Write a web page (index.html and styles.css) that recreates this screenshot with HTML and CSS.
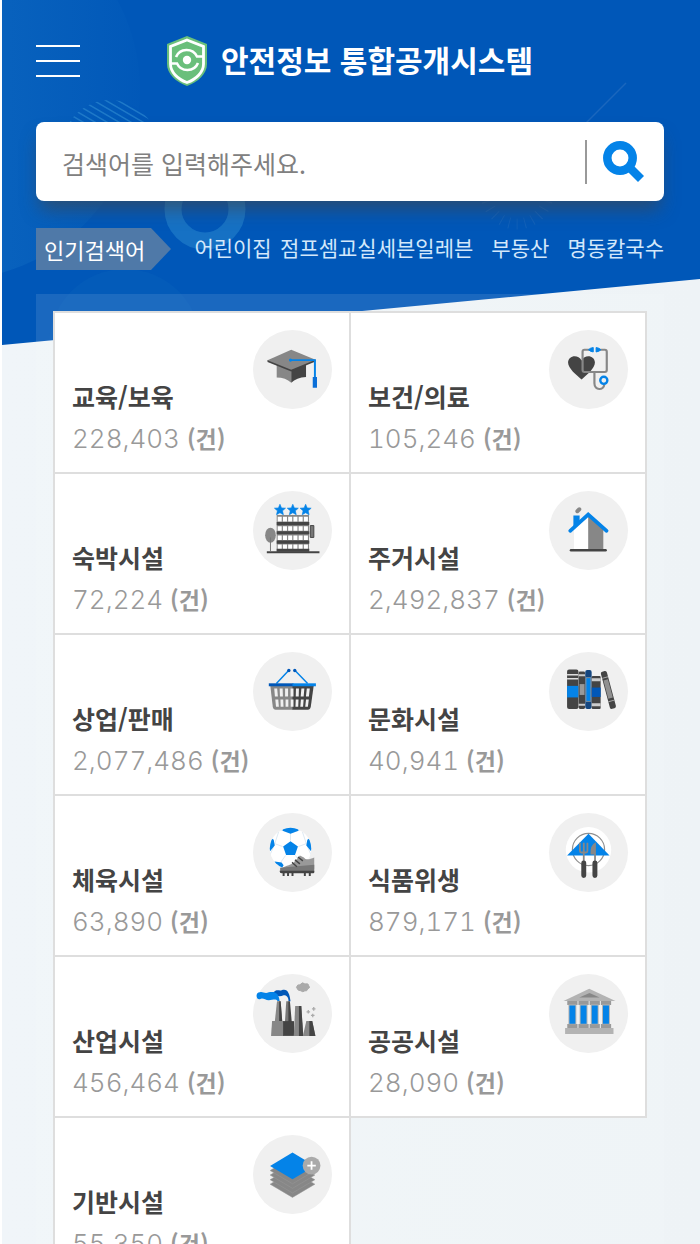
FILE: index.html
```html
<!DOCTYPE html>
<html lang="ko">
<head>
  <meta charset="UTF-8">
  <title>안전정보 통합공개시스템</title>
  <meta name="viewport" content="width=device-width, initial-scale=1.0">
  <link rel="stylesheet" href="styles.css">
</head>
<body>
  <div class="backdrop">
    <svg width="700" height="345" viewBox="2 0 700 345" aria-hidden="true">
      <defs>
        <linearGradient id="glow" x1="0" x2="1">
          <stop offset="0.4" stop-color="#1a78c8" stop-opacity="0.5"/>
          <stop offset="1" stop-color="#1a78c8" stop-opacity="0.04"/>
        </linearGradient>
        <clipPath id="stripeClip"><circle cx="110" cy="148" r="48"/></clipPath>
      </defs>
      <circle cx="-50" cy="90" r="190" fill="url(#glow)"/>
      <circle cx="125" cy="345" r="76" fill="#2a86d0" opacity="0.08"/>
      <g clip-path="url(#stripeClip)" stroke="#2b86cf" stroke-width="1.5" opacity="0.7">
        <path d="M50 124l110 64M50 117l110 64M50 110l110 64M50 103l110 64M50 96l110 64M50 89l110 64M50 82l110 64M50 75l110 64M50 68l110 64M50 61l110 64M50 54l110 64M50 131l110 64M50 138l110 64"/>
      </g>
      <circle cx="205" cy="209" r="32" fill="none" stroke="#1671c4" stroke-width="17"/>
      <path d="M586 123l40-40" stroke="#1a67bd" stroke-width="1.5"/>
      <circle cx="517" cy="193" r="31" fill="none" stroke="#1a67bd" stroke-width="11" stroke-dasharray="1 7" opacity="0.6"/>
    </svg>
  </div>

  <header class="header">
    <button class="menu-btn" type="button" aria-label="메뉴"><span></span><span></span><span></span></button>
    <a class="logo" href="#">
      <svg width="40" height="50" viewBox="0 0 40 50" aria-hidden="true">
        <path d="M20 0l20 8v20c0 10-9 18-20 22C9 46 0 38 0 28V8z" fill="#6abf7b"/>
        <path d="M20 4l16.500 6.500V28c0 8-7 15-16.500 18.500C10.500 43 3.500 36 3.500 28V10.500z" fill="none" stroke="#fff" stroke-width="2.800"/>
        <circle cx="20" cy="24" r="4.200" fill="#fff"/>
        <path d="M9 21a11.500 11.500 0 0 1 21-0.500h6M31 27a11.500 11.500 0 0 1-21 0.500H4" fill="none" stroke="#fff" stroke-width="2.600"/>
      </svg>
      <h1>안전정보 통합공개시스템</h1>
    </a>
  </header>

  <form class="search" action="#">
    <input type="text" aria-label="검색어" placeholder="검색어를 입력해주세요.">
    <button type="submit" aria-label="검색">
      <svg width="42" height="42" viewBox="0 0 42 42" aria-hidden="true">
        <circle cx="17" cy="17" r="12.700" fill="none" stroke="#0483e8" stroke-width="8.500"/>
        <path d="M25 25l13 13" stroke="#0483e8" stroke-width="8.500"/>
      </svg>
    </button>
  </form>

  <div class="popular">
    <h2>인기검색어</h2>
    <ul>
      <li><a href="#">어린이집</a></li>
      <li><a href="#">점프셈교실</a></li>
      <li><a href="#">세븐일레븐</a></li>
      <li><a href="#">부동산</a></li>
      <li><a href="#">명동칼국수</a></li>
    </ul>
  </div>

  <main class="panel">
    <ul class="cards">
      <li><a href="#">
        <svg class="icon" viewBox="0 0 80 80" aria-hidden="true">
          <path d="M24 34v14q9 0 14.700 5.500V38z" fill="#878787"/>
          <path d="M38.700 38v15.500Q44 48 53.700 47.500V34z" fill="#444"/>
          <path d="M14.700 30.500v2L38.700 42l24.600-10v-2z" fill="#444"/>
          <path d="M38.700 20l24.600 10-24.600 10.300-24-9.600z" fill="#878787"/>
          <path d="M38 30.500h24.700V48" fill="none" stroke="#0483e8" stroke-width="2"/>
          <circle cx="38" cy="30.500" r="1.600" fill="#0483e8"/>
          <path d="M60.500 47.500h4.300v11h-4.300z" fill="#0a6fd8"/>
        </svg>
        <strong>교육/보육</strong>
        <span class="count">228,403 <em>(건)</em></span>
      </a></li>
      <li><a href="#">
        <svg class="icon" viewBox="0 0 80 80" aria-hidden="true">
          <path d="M33 50C28 46 19.300 39 19.300 33c0-7 10-9 13.700-2 3.500-7 13.500-5 13.500 2 0 6-8.500 13-13.500 17z" fill="#444"/>
          <path d="M41 20h-5q-2 0-2 2v18.500q0 2 2 2h20.500q2 0 2-2V22q0-2-2-2H51M46 42.500V54c0 7.500 9.500 7.500 10 1" fill="none" stroke="#878787" stroke-width="2.200"/>
          <path d="M40 20l2-1.500 2.800-.7v4.400L42 21.500zM47.700 17.800l2.800.7 2 1.500-2 1.500-2.800.7z" fill="#0483e8" stroke="#0483e8"/>
          <circle cx="55.500" cy="51" r="3.600" fill="#f0f0f0" stroke="#0483e8" stroke-width="2.400"/>
        </svg>
        <strong>보건/의료</strong>
        <span class="count">105,246 <em>(건)</em></span>
      </a></li>
      <li><a href="#">
        <svg class="icon" viewBox="0 0 80 80" aria-hidden="true">
          <defs><path id="star" d="M0-5.600l1.600 3.700 4 .3-3 2.700.9 4-3.500-2.100-3.500 2.100.9-4-3-2.700 4-.3z" fill="#0483e8" stroke="#0483e8" stroke-width=".6"/></defs>
          <use href="#star" x="27.300" y="19"/><use href="#star" x="40.300" y="19"/><use href="#star" x="53.300" y="19"/>
          <path d="M24 24.300h32.700v37H24z" fill="#878787"/>
          <path d="M25 28.500h31M25 38h31M25 47.300h31M25 56.500h31" stroke="#fff" stroke-width="4.600" stroke-dasharray="4.100 1.200"/>
          <path d="M24 33h33M24 42.300h33M24 51.700h33M24 60h33" stroke="#444" stroke-width="3.200"/>
          <path d="M14 62h53.300" stroke="#444" stroke-width="2"/>
          <path d="M58 35h3.600v12H58z" fill="#777" stroke="#444"/>
          <ellipse cx="17.700" cy="44.700" rx="5.400" ry="7.600" fill="#878787"/>
          <path d="M17.700 47v14" stroke="#777"/>
        </svg>
        <strong>숙박시설</strong>
        <span class="count">72,224 <em>(건)</em></span>
      </a></li>
      <li><a href="#">
        <svg class="icon" viewBox="0 0 80 80" aria-hidden="true">
          <path d="M25.300 37l14.400-13v35H25.300z" fill="#fff"/>
          <path d="M39.700 24L55 38v21H39.700z" fill="#878787"/>
          <path d="M24.700 24.700H31v8l-6.300 5z" fill="#0483e8"/>
          <path d="M21.500 40.300l18.200-16.500 18.600 16.500" fill="none" stroke="#0483e8" stroke-width="3.800" stroke-linecap="round"/>
          <path d="M22.300 60h35" stroke="#444" stroke-width="2.600" stroke-linecap="round"/>
          <path d="M28.700 20.500l2-2" stroke="#878787" stroke-width="4" stroke-linecap="round"/>
        </svg>
        <strong>주거시설</strong>
        <span class="count">2,492,837 <em>(건)</em></span>
      </a></li>
      <li><a href="#">
        <svg class="icon" viewBox="0 0 80 80" aria-hidden="true">
          <path d="M17.500 34h23v24.500H23q-2.500 0-3-3z" fill="#878787"/>
          <path d="M40 34h21.500l-3 21.500q-.5 3-3 3H40z" fill="#444"/>
          <path d="M21.500 37h3l.7 8h-3zM27 37h3l.3 8h-3zM32.500 37h3v8h-3zM38 37h3v8h-3zM43.500 37h3l-.2 8h-3zM49 37h3l-.7 8h-3zM54.500 37h3l-.9 8h-3zM22.600 48h3l.6 7.500h-2.900zM27.800 48h2.800l.3 7.500H28zM33 48h2.800v7.500H33zM38.200 48H41v7.500h-2.800zM43.300 48h2.800l-.3 7.500H43zM48.500 48h2.800l-.6 7.500h-2.800zM53.700 48h2.800l-.9 7.500h-2.700z" fill="#f0f0f0"/>
          <path d="M23.700 32l12.600-13.500M55.300 32l-13-13.500" stroke="#0483e8" stroke-width="1.500"/>
          <circle cx="36.300" cy="18.700" r="1.700" fill="#0057b8"/><circle cx="42.300" cy="18.700" r="1.700" fill="#0057b8"/>
          <path d="M16 33.200h25" stroke="#0057b8" stroke-width="3"/><path d="M40 33.200h23.700" stroke="#0483e8" stroke-width="3"/>
        </svg>
        <strong>상업/판매</strong>
        <span class="count">2,077,486 <em>(건)</em></span>
      </a></li>
      <li><a href="#">
        <svg class="icon" viewBox="0 0 80 80" aria-hidden="true">
          <rect x="18.300" y="17.700" width="11.500" height="40" rx="2" fill="#444"/>
          <path d="M18.300 23h11.500M18.300 27h11.500" stroke="#ddd" stroke-width="1.500"/>
          <path d="M18.300 34.300h11.500V46H18.300z" fill="#0483e8"/>
          <rect x="30" y="19.700" width="6.500" height="38" rx="1.500" fill="#444"/>
          <path d="M30 23.500h6.500M30 53.500h6.500" stroke="#ccc" stroke-width="2"/>
          <path d="M31 32.500h5v11h-5z" fill="#999"/>
          <rect x="36.700" y="18.300" width="6.500" height="39.500" rx="2" fill="#15467f"/>
          <path d="M37.400 26h5v24h-5z" fill="#0483e8" stroke="#999" stroke-width=".8"/>
          <rect x="43.300" y="24.300" width="9" height="33.500" rx="1" fill="#444"/>
          <path d="M43.300 28h9M43.300 53.500h9" stroke="#ccc" stroke-width="3"/>
          <path d="M43.300 36h9v9.500h-9z" fill="#0057b8"/>
          <g transform="rotate(-15 60 38.500)">
            <rect x="57" y="19" width="6.300" height="39" rx="2" fill="#444"/>
            <path d="M57.800 28h4.700v19h-4.700z" fill="#909090"/>
            <path d="M57 25.500h6.300M57 50h6.300" stroke="#aaa"/>
          </g>
        </svg>
        <strong>문화시설</strong>
        <span class="count">40,941 <em>(건)</em></span>
      </a></li>
      <li><a href="#">
        <svg class="icon" viewBox="0 0 80 80" aria-hidden="true">
          <defs><clipPath id="ball"><circle cx="38" cy="36" r="21"/></clipPath></defs>
          <circle cx="38" cy="36" r="21" fill="#fff"/>
          <g clip-path="url(#ball)">
            <path d="M38 28V20M30 34l-8-3M46 34l8-3M33 43l-5 7M43 43l5 7M38 20l-14-4M38 20l14-4M22 31l-5 12M54 31l5 12M22 31l4-12M54 31l-4-12" stroke="#dce8f1"/>
            <path d="M38 28.500l7.500 5.500-3 8.500h-9l-3-8.500zM30 13h16v5l-8 3-8-3zM16 24l5 3 1 6-5 6-4-2zM60 24l-5 3-1 6 5 6 4-2zM22 49l7 1 2 3-3 5-9-3z" fill="#0483e8"/>
          </g>
          <path d="M27.500 57c4-3 10-4 13-6l7-8 4 2c2 3 6 2 10.500 0v12z" fill="#999"/>
          <path d="M27.500 55.500l34.500-3V60H27.500z" fill="#777"/>
          <path d="M27 58.500h35V60q0 1-1 1H29q-2 0-2-2z" fill="#444"/>
          <path d="M31 60v3.800M35.500 60v3.800M40 60v3.800M52.500 60v3.800M57.500 60v3.800" stroke="#444" stroke-width="2"/>
          <path d="M39.500 50l5 4.500M42.500 47.500l5 4M45.500 44.500l5 4" stroke="#444" stroke-width="1.400"/>
        </svg>
        <strong>체육시설</strong>
        <span class="count">63,890 <em>(건)</em></span>
      </a></li>
      <li><a href="#">
        <svg class="icon" viewBox="0 0 80 80" aria-hidden="true">
          <circle cx="40" cy="37.300" r="23" fill="#fff"/>
          <circle cx="40" cy="37" r="16.300" fill="none" stroke="#909090" stroke-width="1.200"/>
          <path d="M40 21l21.300 22h-43z" fill="#0483e8"/>
          <path d="M31.300 30v8.500q0 1.500 1.500 1.500h4.600q1.500 0 1.500-1.500V30M35.200 30v20" fill="none" stroke="#878787" stroke-width="1.800"/>
          <path d="M47.500 29.500V50h-1.800v-8H42q-.5-10 5.500-12.500z" fill="#878787"/>
          <path d="M35.200 50.500v12.800M46.500 50.500v12.800" stroke="#444" stroke-width="5" stroke-linecap="round"/>
        </svg>
        <strong>식품위생</strong>
        <span class="count">879,171 <em>(건)</em></span>
      </a></li>
      <li><a href="#">
        <svg class="icon" viewBox="0 0 80 80" aria-hidden="true">
          <path d="M36 27.500c0-4-2-6-5-6-4 2-7 1-11-2 4-5 6-2 9-3 6-2 8 3 9 11z" fill="#0057b8"/>
          <path d="M25 27.500c-2-3-5-1-9-1s-6-3-9-1c-4 1-5-7 0-7 3-1 5 2 9 0 7-1 10 1 11 9z" fill="#0483e8"/>
          <path d="M24.300 27.500H28L29.700 49H22z" fill="#878787"/><path d="M26.500 27.500H28L29.700 49h-3.200zM35.500 27.500h1.900L39.300 49h-3.800z" fill="#444"/>
          <path d="M33.700 27.500h2V49h-3.400z" fill="#777"/>
          <path d="M19.300 47.700h12v15h-13z" fill="#878787"/><path d="M30.500 47.700h11v15h-11z" fill="#444"/>
          <path d="M42.700 32.300h6.200l2 30.400h-9.600z" fill="#878787"/><path d="M46.500 32.300h2.400l2 30.400h-4.400z" fill="#444"/>
          <path d="M54 47.700h6l3.200 15H50.500z" fill="#878787"/><path d="M57 47.700h3l3.200 15H57z" fill="#444"/>
          <path d="M44 13.500q1-3.500 3.500-2.500 2.500-3.500 5-1 4-1 4 2 2 2-1 3-1 3-3 2-2 2-4 0-3 .500-4.500-3.500z" fill="#aaa" stroke="#aaa"/>
          <path d="M56 36.500v3.600M54.200 38.300h3.600M61.500 33.500v3.600M59.700 35.300h3.600M60.500 40.200v3.600M58.700 42h3.600" stroke="#aaa" stroke-width="1.300"/>
        </svg>
        <strong>산업시설</strong>
        <span class="count">456,464 <em>(건)</em></span>
      </a></li>
      <li><a href="#">
        <svg class="icon" viewBox="0 0 80 80" aria-hidden="true">
          <path d="M14.700 27.300L40.700 15l26.600 12.300z" fill="#b3b3b3"/>
          <path d="M30.700 23.700L41 19.300l10.300 4.400z" fill="#878787"/>
          <path d="M18.500 27.300h10.400v4H18.500zM29.800 27.300h10.400v4H29.800zM41.100 27.300h10.400v4H41.100zM52.500 27.300h10.400v4H52.500zM18.500 50.700h10.400v4H18.500zM29.800 50.700h10.400v4H29.800zM41.100 50.700h10.400v4H41.100zM52.500 50.700h10.400v4H52.500z" fill="#999"/>
          <path d="M23.700 31v20M35 31v20M46.300 31v20M57.700 31v20" stroke="#b3b3b3" stroke-width="8"/>
          <path d="M23.700 32v18.500M35 32v18.500M46.300 32v18.500M57.700 32v18.500" stroke="#0483e8" stroke-width="6"/>
          <path d="M16.300 54.700h49v6h-49z" fill="#b3b3b3"/>
        </svg>
        <strong>공공시설</strong>
        <span class="count">28,090 <em>(건)</em></span>
      </a></li>
      <li><a href="#">
        <svg class="icon" viewBox="0 0 80 80" aria-hidden="true">
          <defs><path id="layer" d="M17.300 31.300L40 17.700l22.700 13.600L40 44.700z"/></defs>
          <g fill="#878787" stroke="#999" stroke-width=".5">
            <use href="#layer" y="18.500"/><use href="#layer" y="14"/><use href="#layer" y="9.300"/><use href="#layer" y="4.700"/>
          </g>
          <use href="#layer" fill="#0483e8"/>
          <circle cx="59.300" cy="31" r="9" fill="#aaa"/>
          <path d="M59.300 26.700v8.600M55 31h8.600" stroke="#fff" stroke-width="1.800"/>
        </svg>
        <strong>기반시설</strong>
        <span class="count">55,350 <em>(건)</em></span>
      </a></li>
    </ul>
  </main>
</body>
</html>
```

FILE: styles.css
```css
* {
  box-sizing: border-box;
}
body {
  position: relative;
  margin: 0;
  padding: 0 36px;
  font-family: "Noto Sans CJK KR", "Noto Sans", sans-serif;
  color: #444;
  background: linear-gradient(90deg, #fff 2px, #f0f5f9 2px, #eef3f6 100%);
}
a {
  color: inherit;
  text-decoration: none;
}
ul {
  margin: 0;
  padding: 0;
  list-style: none;
}

/* slanted blue background behind the top of the page */
.backdrop {
  position: absolute;
  top: 0;
  left: 2px;
  right: 0;
  height: 345px;
  overflow: hidden;
  background: #0057b8;
  clip-path: polygon(0 0, 100% 0, 100% 279px, 0 100%);
  z-index: -1;
}
.backdrop svg {
  display: block;
}

.header {
  display: grid;
  grid-template-columns: 44px 1fr 44px;
  align-items: center;
  height: 122px;
}
.menu-btn {
  display: flex;
  flex-direction: column;
  gap: 13px;
  padding: 0;
  border: 0;
  background: none;
  cursor: pointer;
}
.menu-btn span {
  width: 44px;
  height: 2px;
  background: #fff;
}
.logo {
  display: flex;
  justify-content: center;
  align-items: center;
  gap: 14px;
  color: #fff;
}
.logo svg {
  flex: none;
}
.logo h1 {
  margin: 0;
  padding-bottom: 5px;
  font-size: 30px;
  font-weight: 700;
  line-height: 44px;
  white-space: nowrap;
}

.search {
  display: flex;
  align-items: center;
  height: 79px;
  background: #fff;
  border-radius: 8px;
  box-shadow: 0 12px 18px -4px rgba(68, 68, 68, 0.6);
}
.search input {
  flex: 1;
  min-width: 0;
  height: 44px;
  padding: 2px 26px 0;
  border: 0;
  border-right: 2px solid #999;
  outline: none;
  font-family: inherit;
  font-size: 25px;
  color: #444;
  background: none;
}
.search input::placeholder {
  color: #808080;
  opacity: 1;
}
.search button {
  display: flex;
  padding: 0 19px 0 16px;
  border: 0;
  background: none;
  cursor: pointer;
}

.popular {
  display: flex;
  align-items: flex-start;
  margin: 27px 0 24px;
}
.popular h2 {
  flex: none;
  width: 135px;
  margin: 0 15px 0 0;
  padding-left: 8px;
  font-size: 22px;
  font-weight: 400;
  line-height: 42px;
  color: #fff;
  background: #4f79a8;
  clip-path: polygon(0 0, 115px 0, 100% 50%, 115px 100%, 0 100%);
}
.popular ul {
  flex: 1;
  display: grid;
  grid-template-columns: repeat(5, 1fr);
}
.popular li {
  font-size: 21px;
  line-height: 38px;
  text-align: center;
  white-space: nowrap;
  color: #d3e8fb;
}

.panel {
  padding: 17px;
  background: rgba(255, 255, 255, 0.1);
}
.cards {
  display: grid;
  grid-template-columns: 1fr 1fr;
  grid-auto-rows: 161px;
  padding: 2px 0 0 2px;
}
.cards li {
  margin: -2px 0 0 -2px;
  border: 2px solid #dedede;
  background: #fff;
}
.cards a {
  position: relative;
  display: flex;
  flex-direction: column;
  justify-content: flex-end;
  height: 100%;
  padding: 0 17px 12px;
}
.icon {
  position: absolute;
  top: 17px;
  right: 17px;
  width: 79px;
  height: 79px;
  border-radius: 50%;
  background: #f0f0f0;
  overflow: visible;
}
.cards strong {
  font-size: 25px;
  font-weight: 700;
  line-height: 42px;
}
.count {
  font-family: Inter, "Noto Sans CJK KR", sans-serif;
  font-size: 26px;
  font-weight: 300;
  font-variant-numeric: tabular-nums;
  line-height: 43px;
  color: #999;
}
.count em {
  font-family: "Noto Sans CJK KR", sans-serif;
  font-size: 23px;
  font-style: normal;
  font-weight: 700;
}

@media (max-width: 600px) {
  body {
    padding: 0 18px;
  }
  .popular ul {
    display: flex;
    gap: 14px;
    overflow: hidden;
  }
  .logo h1 {
    font-size: 21px;
  }
  .cards strong {
    font-size: 21px;
  }
}
```
